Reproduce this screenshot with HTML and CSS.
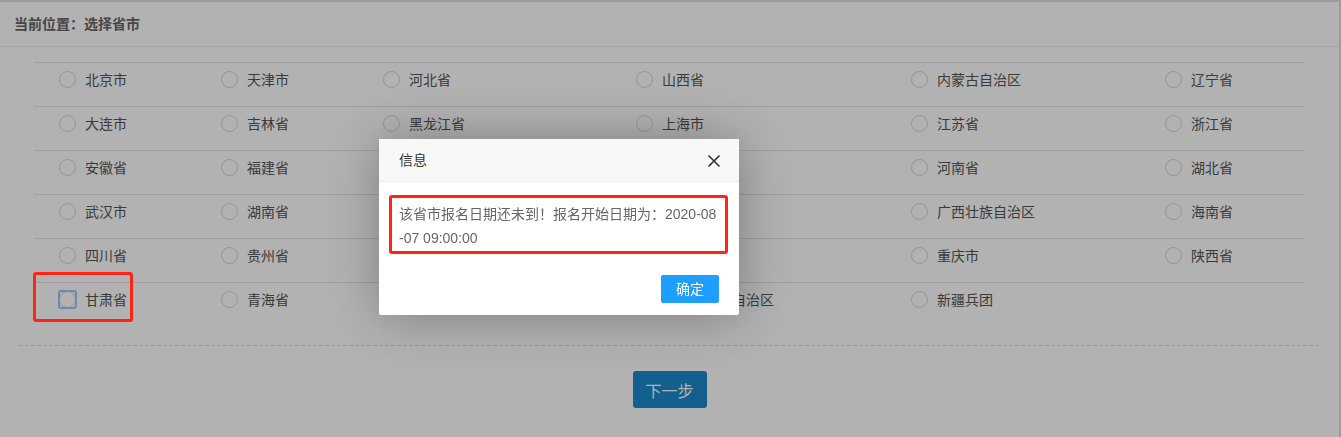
FILE: index.html
```html
<!DOCTYPE html>
<html lang="zh-CN">
<head>
  <meta charset="UTF-8">
  <title>选择省市</title>
  <link rel="stylesheet" href="styles.css">
</head>
<body>

<div class="page">
  <div class="crumb">当前位置：选择省市</div>

  <!-- 省市列表 -->
  <div class="provinces">
    <div class="row">
      <label class="item"><span class="radio"></span>北京市</label>
      <label class="item"><span class="radio"></span>天津市</label>
      <label class="item"><span class="radio"></span>河北省</label>
      <label class="item"><span class="radio"></span>山西省</label>
      <label class="item"><span class="radio"></span>内蒙古自治区</label>
      <label class="item"><span class="radio"></span>辽宁省</label>
    </div>
    <div class="row">
      <label class="item"><span class="radio"></span>大连市</label>
      <label class="item"><span class="radio"></span>吉林省</label>
      <label class="item"><span class="radio"></span>黑龙江省</label>
      <label class="item"><span class="radio"></span>上海市</label>
      <label class="item"><span class="radio"></span>江苏省</label>
      <label class="item"><span class="radio"></span>浙江省</label>
    </div>
    <div class="row">
      <label class="item"><span class="radio"></span>安徽省</label>
      <label class="item"><span class="radio"></span>福建省</label>
      <label class="item"><span class="radio"></span>江西省</label>
      <label class="item"><span class="radio"></span>山东省</label>
      <label class="item"><span class="radio"></span>河南省</label>
      <label class="item"><span class="radio"></span>湖北省</label>
    </div>
    <div class="row">
      <label class="item"><span class="radio"></span>武汉市</label>
      <label class="item"><span class="radio"></span>湖南省</label>
      <label class="item"><span class="radio"></span>广东省</label>
      <label class="item"><span class="radio"></span>深圳市</label>
      <label class="item"><span class="radio"></span>广西壮族自治区</label>
      <label class="item"><span class="radio"></span>海南省</label>
    </div>
    <div class="row">
      <label class="item"><span class="radio"></span>四川省</label>
      <label class="item"><span class="radio"></span>贵州省</label>
      <label class="item"><span class="radio"></span>云南省</label>
      <label class="item"><span class="radio"></span>西藏</label>
      <label class="item"><span class="radio"></span>重庆市</label>
      <label class="item"><span class="radio"></span>陕西省</label>
    </div>
    <div class="row">
      <label class="item"><span class="radio focus"></span>甘肃省</label>
      <label class="item"><span class="radio"></span>青海省</label>
      <label class="item"><span class="radio"></span>宁夏</label>
      <label class="item"><span class="radio"></span>新疆维吾尔自治区</label>
      <label class="item"><span class="radio"></span>新疆兵团</label>
      <span></span>
    </div>
  </div>

  <div class="dashed"></div>

  <div class="actions">
    <button class="btn-next">下一步</button>
  </div>
</div>

<!-- 遮罩 + 弹层 -->
<div class="shade"></div>

<div class="layer">
  <div class="layer-title">
    信息
    <svg class="layer-close" width="14" height="14" viewBox="0 0 14 14">
      <path d="M1.5 1.5 L12.5 12.5 M12.5 1.5 L1.5 12.5" stroke="#2f2f2f" stroke-width="1.6" fill="none"/>
    </svg>
  </div>
  <div class="layer-content">该省市报名日期还未到！报名开始日期为：2020-08-07 09:00:00</div>
  <div class="layer-btn">
    <a class="btn-ok">确定</a>
  </div>
</div>

<!-- 标注框 -->
<div class="mark mark-gansu"></div>
<div class="mark mark-msg"></div>

</body>
</html>
```

FILE: styles.css
```css
body {
  margin: 0;
  font-family: "Liberation Sans", "Noto Sans CJK SC", sans-serif;
  background: #fff;
  color: #555;
  font-size: 14px;
}

.page {
  height: 435px;
  border-top: 2px solid #dedede;
  border-right: 2px solid #dedede;
}

.crumb {
  height: 44px;
  line-height: 44px;
  padding: 0 14px;
  border-bottom: 1px solid #ececec;
  font-weight: bold;
  color: #666;
}

.provinces {
  margin: 15px 36px 0 34px;
}

.row {
  display: grid;
  grid-template-columns: 162px 162px 253px 275px 254px 1fr;
  border-top: 1px solid #e2e2e2;
  padding: 7px 0 18px;
}

.item {
  display: flex;
  align-items: center;
  height: 18px;
  padding-left: 25px;
  gap: 9px;
  white-space: nowrap;
}

.radio {
  box-sizing: border-box;
  width: 17px;
  height: 17px;
  border: 1px solid #d6d6d6;
  border-radius: 50%;
  flex: none;
}

.radio.focus {
  position: relative;
}

.radio.focus::after {
  content: "";
  position: absolute;
  inset: -2px;
  border: 2px solid #9cc3ff;
  border-radius: 3px;
}

.dashed {
  height: 1px;
  margin: 19px 20px 0 19px;
  background: repeating-linear-gradient(90deg, #dcdcdc 0 4px, transparent 4px 6px);
}

.actions {
  display: flex;
  justify-content: center;
  padding-top: 25px;
}

.btn-next {
  width: 74px;
  height: 37px;
  border: none;
  border-radius: 3px;
  background: #1c89cb;
  color: #fff;
  font-family: inherit;
  font-size: 16px;
}

.shade {
  position: fixed;
  inset: 0;
  background: rgba(0, 0, 0, 0.3);
}

.layer {
  position: absolute;
  left: 379px;
  top: 139px;
  width: 360px;
  background: #fff;
  border-radius: 2px;
  box-shadow: 1px 1px 50px rgba(0, 0, 0, 0.3);
}

.layer-title {
  height: 42px;
  line-height: 42px;
  padding: 0 20px;
  background: #f8f8f8;
  border-bottom: 1px solid #eee;
  color: #333;
  position: relative;
}

.layer-close {
  position: absolute;
  right: 18px;
  top: 15px;
}

.layer-content {
  padding: 20px;
  line-height: 24px;
  color: #666;
  word-break: break-all;
}

.layer-btn {
  text-align: right;
  padding: 0 15px 12px;
}

.btn-ok {
  display: inline-block;
  height: 28px;
  line-height: 28px;
  padding: 0 15px;
  margin: 5px 5px 0;
  background: #1e9fff;
  color: #fff;
  border-radius: 2px;
}

.mark {
  position: absolute;
  border: 3px solid #ff2418;
  border-radius: 3px;
  box-sizing: border-box;
}

.mark-gansu {
  left: 33px;
  top: 272px;
  width: 100px;
  height: 50px;
}

.mark-msg {
  left: 389px;
  top: 195px;
  width: 339px;
  height: 59px;
}
```
